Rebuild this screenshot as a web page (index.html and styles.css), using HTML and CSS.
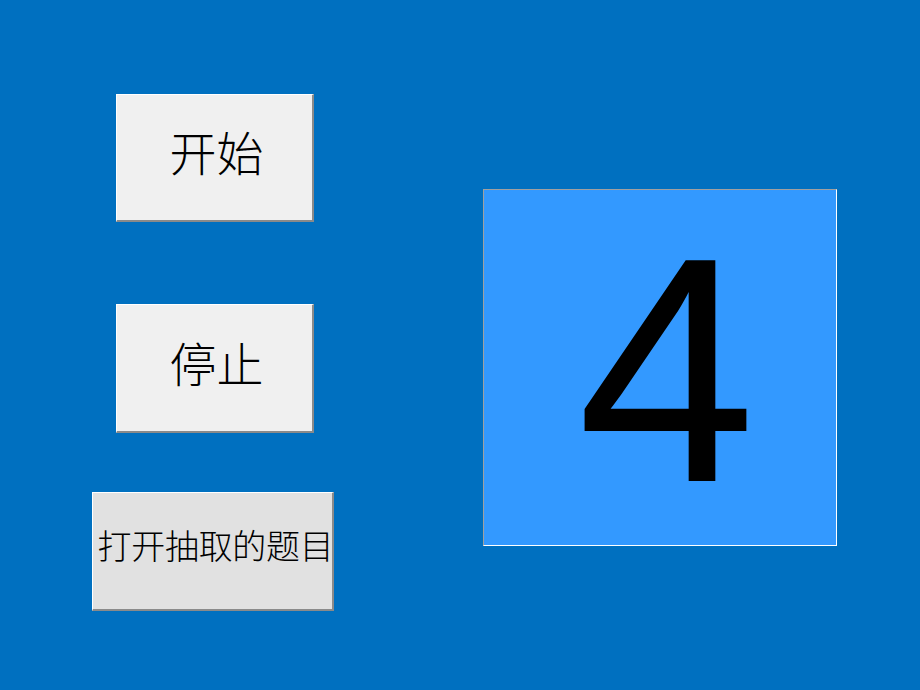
FILE: index.html
```html
<!DOCTYPE html>
<html lang="zh-CN">
<head>
<meta charset="utf-8">
<title>抽取题目</title>
<link rel="stylesheet" href="styles.css">
</head>
<body>
<div class="app">
  <div class="controls">
    <button class="btn btn-main btn-start">开始</button>
    <button class="btn btn-main btn-stop">停止</button>
    <button class="btn btn-open">打开抽取的题目</button>
  </div>
  <div class="display">
    <span class="number">4</span>
  </div>
</div>
</body>
</html>
```

FILE: styles.css
```css
html, body {
  margin: 0;
  padding: 0;
  background: #0070c0;
  width: 920px;
  height: 690px;
  overflow: hidden;
}

.app {
  display: flex;
  align-items: flex-start;
  padding-left: 92px;
}

.controls {
  display: flex;
  flex-direction: column;
  align-items: flex-start;
  width: 242px;
  padding-top: 94px;
}

.btn {
  display: flex;
  align-items: center;
  justify-content: center;
  box-sizing: border-box;
  margin: 0;
  padding: 0;
  font-family: "Noto Sans CJK SC", sans-serif;
  font-weight: 300;
  color: #000;
  line-height: 1;
  border-style: solid;
  border-width: 1px 2px 2px 1px;
  border-color: #ffffff #8a8a8a #8a8a8a #ffffff;
  cursor: default;
}

.btn-main {
  width: 198px;
  height: 128px;
  margin-left: 24px;
  background: #f0f0f0;
  font-size: 47px;
  letter-spacing: 0;
  padding-bottom: 14px;
  padding-left: 4px;
}

.btn-stop {
  margin-top: 82px;
  height: 129px;
}

.btn-open {
  width: 242px;
  height: 119px;
  margin-top: 59px;
  background: #e1e1e1;
  font-size: 34px;
  letter-spacing: -0.3px;
  padding-bottom: 12px;
  padding-left: 6px;
  white-space: nowrap;
}

.display {
  box-sizing: border-box;
  width: 354px;
  height: 357px;
  margin-left: 149px;
  margin-top: 189px;
  background: #3399ff;
  border-style: solid;
  border-width: 1px;
  border-color: #a0a0a0 #ffffff #ffffff #a0a0a0;
  display: flex;
  align-items: center;
  justify-content: center;
  padding-left: 13px;
  padding-top: 4px;
}

.number {
  font-family: "Liberation Sans", Arial, sans-serif;
  font-size: 321px;
  line-height: 1;
  color: #000;
}
```
